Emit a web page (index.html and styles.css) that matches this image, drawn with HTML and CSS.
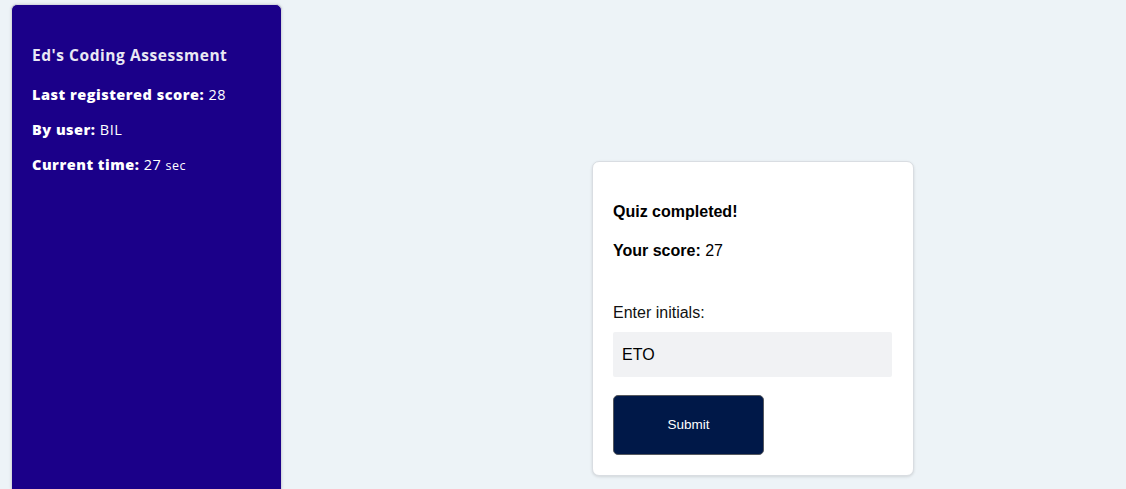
FILE: index.html
```html
<!DOCTYPE html>
<html>
<head>
<meta charset="utf-8">
<link rel="stylesheet" href="styles.css">
</head>
<body>
<div class="layout">
  <aside class="sidebar">
    <h1 class="title">Ed's Coding Assessment</h1>
    <p class="stat"><b>Last registered score:</b> 28</p>
    <p class="stat"><b>By user:</b> BIL</p>
    <p class="stat"><b>Current time:</b> 27 <span class="unit">sec</span></p>
  </aside>
  <main class="main">
    <section class="card">
      <p class="heading">Quiz completed!</p>
      <p class="score"><b>Your score:</b> 27</p>
      <label class="label" for="initials">Enter initials:</label>
      <input class="input" id="initials" type="text" value="ETO">
      <button class="submit" type="button">Submit</button>
    </section>
  </main>
</div>
</body>
</html>
```

FILE: styles.css
```css
html, body {
  margin: 0;
  padding: 0;
  height: 100%;
  overflow: hidden;
}
body {
  background: #edf3f7;
  font-family: "Liberation Sans", Arial, sans-serif;
  color: #000;
}
.layout {
  display: flex;
  align-items: flex-start;
  height: 100%;
}
.sidebar {
  margin: 4px 0 0 11px;
  width: 271px;
  box-sizing: border-box;
  height: calc(100vh - 4px);
  background: #1b0089;
  border: 1px solid #d6d9e0;
  border-bottom: none;
  border-radius: 6px 6px 0 0;
  padding: 40px 20px 0 20px;
  font-family: "Open Sans", "Lato", sans-serif;
  color: #fff;
  box-shadow: 0 0 3px rgba(0,0,0,0.12);
}
.title {
  margin: 0 0 20px 0;
  font-size: 15.5px;
  font-weight: 700;
  line-height: 20px;
  color: #e9e8f4;
  letter-spacing: 0.55px;
}
.stat {
  margin: 0 0 15px 0;
  font-size: 14.5px;
  line-height: 20px;
  letter-spacing: 0.5px;
}
.stat b {
  font-weight: 800;
}
.unit {
  font-size: 12.5px;
}
.main {
  flex: 1;
  padding: 161px 0 0 310px;
}
.card {
  width: 322px;
  box-sizing: border-box;
  background: #fff;
  border: 1px solid #d9dde2;
  border-radius: 7px;
  box-shadow: 0 1px 3px rgba(0,0,0,0.12);
  padding: 41px 21px 20px 20px;
  display: flex;
  flex-direction: column;
}
.heading {
  margin: 0 0 21px 0;
  font-size: 16px;
  font-weight: 700;
  line-height: 18px;
}
.score {
  margin: 0 0 44px 0;
  font-size: 16px;
  line-height: 18px;
}
.label {
  font-size: 16px;
  line-height: 18px;
  margin-bottom: 10px;
  color: #111;
}
.input {
  box-sizing: border-box;
  width: 279px;
  height: 45px;
  border: none;
  border-radius: 2px;
  background: #f1f2f4;
  padding: 0 9px;
  font-family: "Liberation Sans", Arial, sans-serif;
  font-size: 16px;
  color: #000;
  margin-bottom: 18px;
  outline: none;
}
.submit {
  width: 151px;
  height: 60px;
  background: #001848;
  color: #fff;
  border: 1px solid #55585e;
  border-radius: 5px;
  font-family: "Liberation Sans", Arial, sans-serif;
  font-size: 13.5px;
  padding: 0 0 2px 0;
  cursor: pointer;
}
```
